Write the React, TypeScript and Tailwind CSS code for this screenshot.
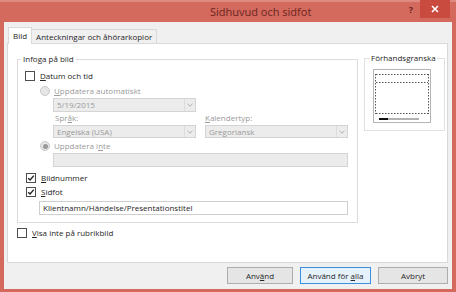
import React from "react";

const Check = ({ checked }: { checked?: boolean }) => (
  <div className="w-[10px] h-[10px] border border-[#4d4d4d] bg-white flex items-center justify-center shrink-0">
    {checked && (
      <svg width="8" height="8" viewBox="0 0 8 8">
        <path d="M1.2 4.2 L3.1 6 L6.8 1.6" stroke="#222" strokeWidth="1.4" fill="none" />
      </svg>
    )}
  </div>
);

const Radio = ({ selected }: { selected?: boolean }) => (
  <div className="w-[10px] h-[10px] rounded-full border border-[#c8c8c8] bg-[#e6e6e6] flex items-center justify-center shrink-0">
    {selected && <div className="w-[5px] h-[5px] rounded-full bg-[#9a9a9a]" />}
  </div>
);

const Select = ({ value, w }: { value: string; w: string }) => (
  <div className={`${w} h-full border border-[#d4d4d4] bg-[#ececec] flex items-center`}>
    <span className="flex-1 pl-[3px] text-[#9a9a9a] truncate">{value}</span>
    <div className="w-[11px] h-full border-l border-[#dcdcdc] flex items-center justify-center">
      <svg width="6" height="4" viewBox="0 0 6 4">
        <path d="M0.5 0.8 L3 3.2 L5.5 0.8" stroke="#a8a8a8" strokeWidth="0.9" fill="none" />
      </svg>
    </div>
  </div>
);

export default function App() {
  return (
    <div
      className="w-[456px] h-[292px] bg-[#d4695d] flex flex-col text-[8px] leading-[10px] text-[#262626]"
      style={{ fontFamily: '"Open Sans", "Noto Sans", sans-serif' }}
    >
      {/* title bar */}
      <div className="h-[22px] flex items-start border-t-2 border-[#de8a80]">
        <div className="pl-[210px] pt-[3px] text-[11px] leading-[14px] text-[#6b2620]">Sidhuvud och sidfot</div>
        <div className="flex-1" />
        <div className="pt-[2px] pr-[7px] text-[9px] leading-[12px] font-bold text-[#6b2620]">?</div>
        <div className="w-[30px] h-[18px] bg-[#c94b3f] flex items-center justify-center mr-[6px] -mt-[2px]">
          <svg width="8" height="8" viewBox="0 0 8 8">
            <path d="M1 1 L7 7 M7 1 L1 7" stroke="#fff" strokeWidth="1.6" />
          </svg>
        </div>
      </div>

      {/* content */}
      <div className="mx-[4px] h-[267px] bg-[#f0f0f0] flex flex-col">
        {/* tabs */}
        <div className="pt-[5px] pl-[4px] flex items-end">
          <div className="h-[17px] px-[4px] border border-b-0 border-[#d9d9d9] bg-white flex items-center relative z-10 -mb-px">
            Bild
          </div>
          <div className="h-[14px] px-[4px] border border-b-0 border-l-0 border-[#d9d9d9] bg-[#f0f0f0] flex items-center">
            Anteckningar och åhörarkopior
          </div>
        </div>

        {/* panel */}
        <div className="ml-[3px] w-[441px] h-[220px] border border-[#d9d9d9] bg-white flex flex-col">
          <div className="flex items-start">
            {/* Infoga group */}
            <div className="ml-[9px] mt-[15px] w-[341px] h-[164px] border border-[#dcdcdc] relative flex flex-col">
              <span className="absolute -top-[6px] left-[3px] bg-white px-[2px]">Infoga på bild</span>
              <div className="pt-[10px] pl-[7px] h-[22px] flex items-end">
                <div className="flex items-center h-[12px] gap-[5px]">
                  <Check />
                  <span>
                    <u>D</u>atum och tid
                  </span>
                </div>
              </div>
              <div className="mt-[3px] ml-[22px] h-[12px] flex items-center gap-[4px] text-[#9a9a9a]">
                <Radio />
                <span>
                  <u>U</u>ppdatera automatiskt
                </span>
              </div>
              <div className="mt-[1px] ml-[35px] h-[14px] flex">
                <Select value="5/19/2015" w="w-[143px]" />
              </div>
              <div className="ml-[37px] h-[10px] mt-[1px] flex text-[#9a9a9a]">
                <span className="w-[150px]">
                  Spr<u>å</u>k:
                </span>
                <span>
                  <u>K</u>alendertyp:
                </span>
              </div>
              <div className="mt-[2px] ml-[35px] h-[13px] flex gap-[9px]">
                <Select value="Engelska (USA)" w="w-[143px]" />
                <Select value="Gregoriansk" w="w-[143px]" />
              </div>
              <div className="mt-[2px] ml-[22px] h-[12px] flex items-center gap-[4px] text-[#9a9a9a]">
                <Radio selected />
                <span>
                  Uppdatera i<u>n</u>te
                </span>
              </div>
              <div className="mt-[1px] ml-[35px] w-[295px] h-[14px] border border-[#d4d4d4] bg-[#ececec]" />
              <div className="mt-[5px] ml-[8px] h-[12px] flex items-center gap-[5px]">
                <Check checked />
                <span>
                  <u>B</u>ildnummer
                </span>
              </div>
              <div className="mt-[2px] ml-[8px] h-[12px] flex items-center gap-[5px]">
                <Check checked />
                <span>
                  <u>S</u>idfot
                </span>
              </div>
              <div className="mt-[3px] ml-[21px] w-[309px] h-[14px] border border-[#cfcfcf] bg-white flex items-center pl-[3px]">
                Klientnamn/Händelse/Presentationstitel
              </div>
            </div>

            {/* Preview group */}
            <div className="ml-[6px] mt-[14px] w-[81px] h-[73px] border border-[#e0e0e0] relative flex flex-col items-start">
              <span className="absolute -top-[6px] left-[5px] bg-white px-[1px]">Förhandsgranska</span>
              <div className="mt-[10px] ml-[8px]">
                <svg width="58" height="54" viewBox="0 0 58 54">
                  <rect x="0.5" y="0.5" width="57" height="53" fill="#fff" stroke="#b5b5b5" />
                  <line x1="3" y1="5.5" x2="55" y2="5.5" stroke="#555" strokeDasharray="1.5 1.5" />
                  <line x1="3" y1="13.5" x2="55" y2="13.5" stroke="#555" strokeDasharray="1.5 1.5" />
                  <line x1="3" y1="44.5" x2="55" y2="44.5" stroke="#555" strokeDasharray="1.5 1.5" />
                  <line x1="2.5" y1="5" x2="2.5" y2="45" stroke="#555" strokeDasharray="1.5 1.5" />
                  <line x1="55.5" y1="5" x2="55.5" y2="45" stroke="#555" strokeDasharray="1.5 1.5" />
                  <rect x="6" y="49" width="9" height="2" fill="#111" />
                  <rect x="15" y="49.5" width="31" height="1" fill="#666" />
                </svg>
              </div>
            </div>
          </div>

          {/* Visa inte */}
          <div className="mt-[4px] ml-[9px] h-[11px] flex items-center gap-[5px]">
            <Check />
            <span>
              <u>V</u>isa inte på rubrikbild
            </span>
          </div>
        </div>

        {/* buttons */}
        <div className="mt-[4px] pr-[4px] flex justify-end gap-[7px]">
          <div className="w-[66px] h-[17px] border border-[#adadad] bg-[#e5e5e5] flex items-center justify-center">
            <span>
              Anv<u>ä</u>nd
            </span>
          </div>
          <div className="w-[71px] h-[17px] border border-[#3c8fdc] bg-[#e5f1fb] flex items-center justify-center">
            <span>
              Använd för <u>a</u>lla
            </span>
          </div>
          <div className="w-[70px] h-[17px] border border-[#adadad] bg-[#e5e5e5] flex items-center justify-center">
            Avbryt
          </div>
        </div>
      </div>
    </div>
  );
}
